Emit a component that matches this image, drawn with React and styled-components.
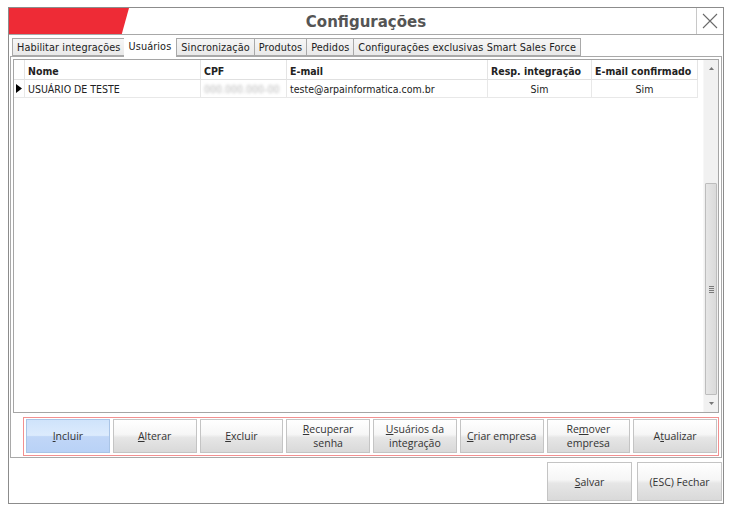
import React from 'react'
import styled, { createGlobalStyle } from 'styled-components'

const UI_FONT = '"DejaVu Sans Condensed", "DejaVu Sans", sans-serif'
const BTN_FONT = '"Open Sans", "Noto Sans", sans-serif'

const GlobalStyle = createGlobalStyle`
  html, body {
    margin: 0;
    padding: 0;
    background: #ffffff;
  }
  body {
    font-family: ${UI_FONT};
    font-size: 10px;
    color: #222;
  }
`

const Window = styled.div`
  margin: 7px 0 0 8px;
  width: 716px;
  height: 497px;
  box-sizing: border-box;
  border: 1px solid #8c8c8c;
  display: flex;
  flex-direction: column;
  background: #fff;
`

const TitleBar = styled.div`
  height: 26px;
  display: grid;
  grid-template-columns: 120px 1fr 120px;
  border-bottom: 1px solid #a8a8a8;
`

const RedBand = styled.div`
  background: #ee2b36;
  clip-path: polygon(0 0, 100% 0, 94% 100%, 0 100%);
`

const Title = styled.div`
  display: flex;
  align-items: center;
  justify-content: center;
  font-family: "DejaVu Sans", sans-serif;
  font-weight: bold;
  font-size: 15px;
  color: #555;
  padding-top: 1px;
`

const CloseSlot = styled.div`
  display: flex;
  justify-content: flex-end;
`

const CloseBox = styled.div`
  width: 26px;
  border-left: 1px solid #c8c8c8;
  display: flex;
  align-items: center;
  justify-content: center;
`

const TabStrip = styled.div`
  height: 21px;
  display: flex;
  align-items: flex-end;
  padding-left: 3px;
  position: relative;
  z-index: 1;
`

const Tab = styled.div`
  height: ${p => (p.$active ? '20px' : '18px')};
  box-sizing: border-box;
  padding: 0 ${p => (p.$active ? '5px' : '4px')};
  margin-right: -1px;
  display: flex;
  align-items: center;
  border: 1px solid #a9a9a9;
  border-bottom: ${p => (p.$active ? '1px solid #fff' : '1px solid #a9a9a9')};
  background: ${p => (p.$active ? '#fff' : 'linear-gradient(#f6f6f6, #e9e9e9)')};
  margin-bottom: ${p => (p.$active ? '-1px' : '0')};
  font-size: 10.8px;
  letter-spacing: 0.1px;
  color: #222;
  white-space: nowrap;
  ${p => p.$active && 'margin-left: -1px; margin-right: 0; border-top: 1px solid #fff; border-left: none; border-right: none; padding-bottom: 2px;'}
`

const Panel = styled.div`
  margin: 0 1px;
  height: 402px;
  box-sizing: border-box;
  border: 1px solid #a9a9a9;
  padding: 2px 2px 1px 2px;
  display: flex;
  flex-direction: column;
  gap: 4px;
`

const Grid = styled.div`
  height: 354px;
  box-sizing: border-box;
  border: 1px solid #a5a5a5;
  display: flex;
  background: #fff;
`

const TableArea = styled.div`
  flex: 1;
  display: flex;
  flex-direction: column;
`

const Row = styled.div`
  display: grid;
  grid-template-columns: 11px 176px 86px 201px 104px 106px;
  height: ${p => p.$h}px;
`

const HeadCell = styled.div`
  display: flex;
  align-items: center;
  padding: 2px 3px 0;
  font-weight: bold;
  font-size: 10.5px;
  color: #222;
  border-right: 1px solid #e4e4e4;
  border-bottom: 1px solid #e0e0e0;
  white-space: nowrap;
  overflow: hidden;
`

const Cell = styled.div`
  display: flex;
  align-items: center;
  justify-content: ${p => (p.$center ? 'center' : 'flex-start')};
  padding: ${p => (p.$center ? '0' : '0 3px')};
  font-size: 10.5px;
  color: #222;
  border-right: 1px solid #e8e8e8;
  border-bottom: 1px solid #e8e8e8;
  white-space: nowrap;
  overflow: hidden;
`

const Blurred = styled.span`
  color: #b8b8b8;
  filter: blur(1.4px);
`

const Indicator = styled.div`
  display: flex;
  align-items: center;
  justify-content: center;
  border-right: 1px solid #e8e8e8;
  border-bottom: 1px solid #e8e8e8;
`

const ScrollBar = styled.div`
  width: 14px;
  background: #f1f1f1;
  display: flex;
  flex-direction: column;
  border-left: 1px solid #f7f7f7;
`

const ScrollArrow = styled.div`
  height: 17px;
  display: flex;
  align-items: center;
  justify-content: center;
`

const Track = styled.div`
  flex: 1;
  display: flex;
  flex-direction: column;
  justify-content: flex-end;
  padding: 0 1px;
`

const Thumb = styled.div`
  height: 212px;
  box-sizing: border-box;
  border: 1px solid #bdbdbd;
  border-radius: 1px;
  background: linear-gradient(90deg, #e6e6e6, #dadada);
  display: flex;
  align-items: center;
  justify-content: center;
`

const Grip = styled.div`
  width: 5px;
  height: 7px;
  background: repeating-linear-gradient(#7a7a7a 0 1px, transparent 1px 2px);
`

const ActionBar = styled.div`
  margin-left: 10px;
  height: 39px;
  box-sizing: border-box;
  border: 1px solid #f29090;
  padding: 1px 1px 2px 2px;
  display: flex;
  gap: 3px;
`

const Button = styled.button`
  flex: ${p => (p.$fixed ? '0 0 85px' : '1')};
  height: ${p => (p.$fixed ? '39px' : '34px')};
  box-sizing: border-box;
  margin: 0;
  padding: 0 2px;
  border: 1px solid ${p => (p.$focus ? '#a9c4e6' : '#c4c4c4')};
  background: ${p =>
    p.$focus
      ? 'linear-gradient(#cfe3fb 0%, #dcebfd 48%, #c0d6f7 52%, #b9d2f6 100%)'
      : 'linear-gradient(#ffffff 0%, #f6f6f6 45%, #e6e6e6 55%, #d9d9d9 100%)'};
  font-family: ${BTN_FONT};
  font-size: 10.5px;
  line-height: 14px;
  color: #333;
  cursor: default;
  u {
    text-decoration-thickness: 1px;
    text-underline-offset: 1px;
  }
`

const Footer = styled.div`
  flex: 1;
  display: flex;
  justify-content: flex-end;
  align-items: flex-start;
  padding: 4px 1px 0 0;
  gap: 5px;
`

const columns = [
  { key: 'nome', label: 'Nome' },
  { key: 'cpf', label: 'CPF' },
  { key: 'email', label: 'E-mail' },
  { key: 'resp', label: 'Resp. integração' },
  { key: 'conf', label: 'E-mail confirmado' },
]

const users = [
  { nome: 'USUÁRIO DE TESTE', cpf: '000.000.000-00', email: 'teste@arpainformatica.com.br', resp: 'Sim', conf: 'Sim' },
]

const tabs = [
  'Habilitar integrações',
  'Usuários',
  'Sincronização',
  'Produtos',
  'Pedidos',
  'Configurações exclusivas Smart Sales Force',
]

const actions = [
  [<u key="u">I</u>, 'ncluir'],
  [<u key="u">A</u>, 'lterar'],
  [<u key="u">E</u>, 'xcluir'],
  [<u key="u">R</u>, 'ecuperar', <br key="b" />, 'senha'],
  [<u key="u">U</u>, 'suários da', <br key="b" />, 'integração'],
  [<u key="u">C</u>, 'riar empresa'],
  ['Re', <u key="u">m</u>, 'over', <br key="b" />, 'empresa'],
  ['A', <u key="u">t</u>, 'ualizar'],
]

function CloseIcon() {
  return (
    <svg width="16" height="16" viewBox="0 0 16 16">
      <path d="M1 1 L15 15 M15 1 L1 15" stroke="#6a6a6a" strokeWidth="1.1" fill="none" />
    </svg>
  )
}

export default function App() {
  return (
    <>
      <GlobalStyle />
      <Window>
        <TitleBar>
          <RedBand />
          <Title>Configurações</Title>
          <CloseSlot>
            <CloseBox>
              <CloseIcon />
            </CloseBox>
          </CloseSlot>
        </TitleBar>

        <TabStrip>
          {tabs.map(t => (
            <Tab key={t} $active={t === 'Usuários'}>{t}</Tab>
          ))}
        </TabStrip>

        <Panel>
          <Grid>
            <TableArea>
              <Row $h={20}>
                <HeadCell />
                {columns.map(c => (
                  <HeadCell key={c.key}>{c.label}</HeadCell>
                ))}
              </Row>
              {users.map(u => (
                <Row key={u.email} $h={18}>
                  <Indicator>
                    <svg width="6" height="9" viewBox="0 0 6 9">
                      <path d="M0 0 L6 4.5 L0 9 Z" fill="#000" />
                    </svg>
                  </Indicator>
                  <Cell>{u.nome}</Cell>
                  <Cell><Blurred>{u.cpf}</Blurred></Cell>
                  <Cell>{u.email}</Cell>
                  <Cell $center>{u.resp}</Cell>
                  <Cell $center>{u.conf}</Cell>
                </Row>
              ))}
            </TableArea>
            <ScrollBar>
              <ScrollArrow>
                <svg width="5" height="3" viewBox="0 0 5 3"><path d="M0 3 L2.5 0 L5 3 Z" fill="#777" /></svg>
              </ScrollArrow>
              <Track>
                <Thumb><Grip /></Thumb>
              </Track>
              <ScrollArrow>
                <svg width="5" height="3" viewBox="0 0 5 3"><path d="M0 0 L2.5 3 L5 0 Z" fill="#777" /></svg>
              </ScrollArrow>
            </ScrollBar>
          </Grid>

          <ActionBar>
            {actions.map((a, i) => (
              <Button key={i} $focus={i === 0}>{a}</Button>
            ))}
          </ActionBar>
        </Panel>

        <Footer>
          <Button $fixed><u>S</u>alvar</Button>
          <Button $fixed>(ESC) Fechar</Button>
        </Footer>
      </Window>
    </>
  )
}
